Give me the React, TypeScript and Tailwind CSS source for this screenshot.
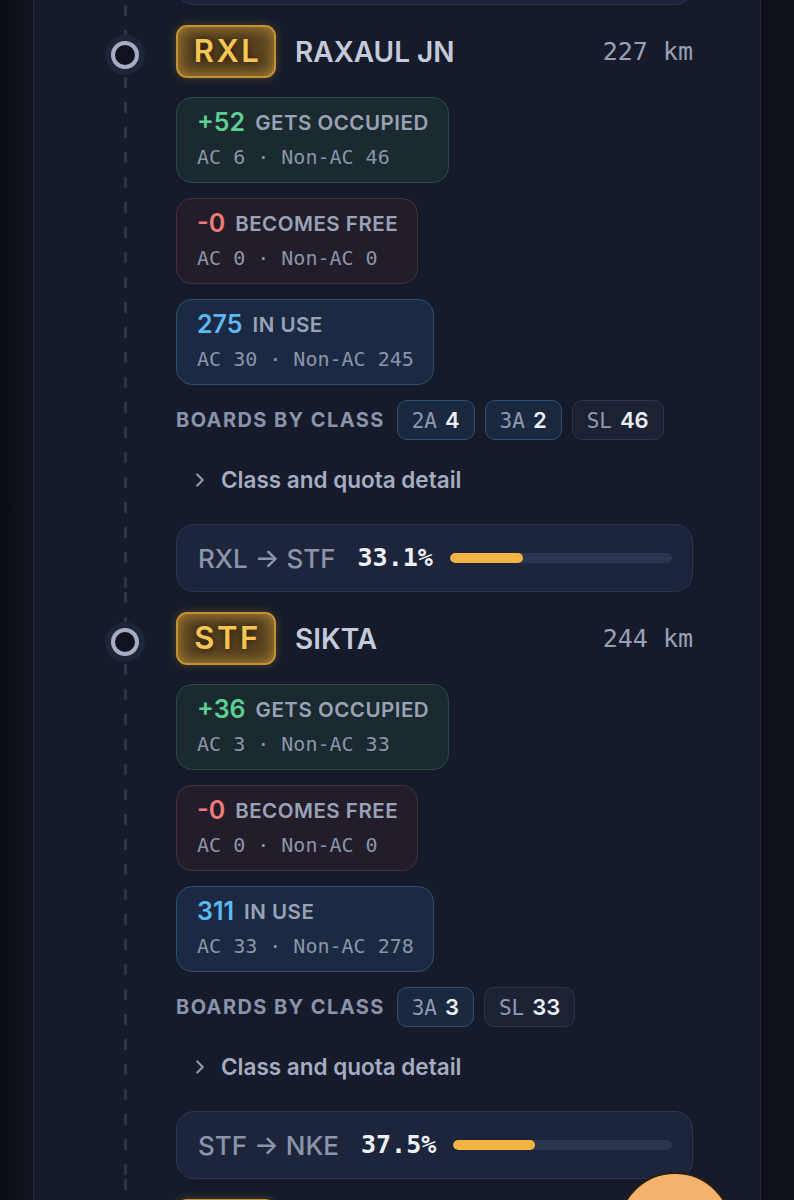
import { ChevronRight } from "lucide-react";

const SANS = "font-['Inter','Noto_Sans',sans-serif]";
const MONO = "font-['DejaVu_Sans_Mono','Liberation_Mono',monospace]";

const DASH =
  "w-[3px] [background-image:repeating-linear-gradient(to_bottom,#2c3447_0px,#2c3447_11px,transparent_11px,transparent_25px)]";

type Split = { n: number; ac: number; non: number };
type Board = { c: string; n: number; ac: boolean };
type Station = {
  code: string;
  name: string;
  km: number;
  occ: Split;
  free: Split;
  use: Split;
  boards: Board[];
  next: string;
  pct: number;
};

const stations: Station[] = [
  {
    code: "RXL",
    name: "RAXAUL JN",
    km: 227,
    occ: { n: 52, ac: 6, non: 46 },
    free: { n: 0, ac: 0, non: 0 },
    use: { n: 275, ac: 30, non: 245 },
    boards: [
      { c: "2A", n: 4, ac: true },
      { c: "3A", n: 2, ac: true },
      { c: "SL", n: 46, ac: false },
    ],
    next: "STF",
    pct: 33.1,
  },
  {
    code: "STF",
    name: "SIKTA",
    km: 244,
    occ: { n: 36, ac: 3, non: 33 },
    free: { n: 0, ac: 0, non: 0 },
    use: { n: 311, ac: 33, non: 278 },
    boards: [
      { c: "3A", n: 3, ac: true },
      { c: "SL", n: 33, ac: false },
    ],
    next: "NKE",
    pct: 37.5,
  },
  {
    code: "NKE",
    name: "NARKATIAGANJ",
    km: 262,
    occ: { n: 20, ac: 2, non: 18 },
    free: { n: 4, ac: 0, non: 4 },
    use: { n: 327, ac: 35, non: 292 },
    boards: [{ c: "SL", n: 18, ac: false }],
    next: "BTH",
    pct: 39.4,
  },
];

function ProgressCard({ from, to, pct }: { from: string; to: string; pct: number }) {
  return (
    <div className="h-[68px] rounded-[18px] border border-[#2b3650] bg-[#1c253b] pl-[21px] pr-[20px] flex items-center">
      <span className={`${SANS} text-[26px] font-medium text-[#8c94ab] whitespace-nowrap`}>
        {from} → {to}
      </span>
      <span className={`${MONO} ml-[22px] text-[25px] font-bold text-[#eef1f6]`}>
        {pct.toFixed(1)}%
      </span>
      <div className="ml-[17px] flex-1 h-[10px] rounded-full bg-[#2c3650] overflow-hidden">
        <div className="h-full rounded-full bg-[#f4b443]" style={{ width: `${pct}%` }} />
      </div>
    </div>
  );
}

function StatCard({
  value,
  label,
  split,
  tone,
}: {
  value: string;
  label: string;
  split: Split;
  tone: "green" | "red" | "blue";
}) {
  const box =
    tone === "green"
      ? "bg-[#1a2a2f] border-[#2b4a45]"
      : tone === "red"
      ? "bg-[#221d29] border-[#4a2f3b]"
      : "bg-[#1b2a42] border-[#2e4f6f]";
  const num =
    tone === "green" ? "text-[#5dcf94]" : tone === "red" ? "text-[#ef7b78]" : "text-[#5bb8f4]";
  return (
    <div className={`self-start rounded-[16px] border ${box} pl-[20px] pr-[19px] py-[10px]`}>
      <div className="h-[30px] flex items-center gap-[10px] whitespace-nowrap">
        <span className={`${SANS} text-[25px] font-semibold ${num}`}>{value}</span>
        <span className={`${SANS} text-[20.5px] font-semibold tracking-[0.025em] text-[#9aa2b7]`}>
          {label}
        </span>
      </div>
      <div className={`${MONO} mt-[4px] h-[30px] flex items-center text-[20px] text-[#8c94aa] whitespace-pre`}>
        AC {split.ac} · Non-AC {split.non}
      </div>
    </div>
  );
}

function TimelineNode() {
  return (
    <div className="w-[40px] flex flex-col items-center self-stretch">
      <div className={`${DASH} h-[30px]`} />
      <div className="w-[40px] h-[40px] rounded-full bg-[#1d2539] flex items-center justify-center">
        <div className="w-[28px] h-[28px] rounded-full border-4 border-[#a5acc4] bg-[#0f1320]" />
      </div>
      <div className={`${DASH} flex-1 mt-[2px]`} />
    </div>
  );
}

function StationBlock({ s }: { s: Station }) {
  return (
    <div className="flex">
      <TimelineNode />
      <div className="ml-[31px] flex-1 pt-[20px] flex flex-col">
        <div className="h-[53px] flex items-center">
          <div
            className={`${SANS} h-[53px] w-[100px] rounded-[11px] border-2 border-[#c4932f] bg-[#5a4421] shadow-[inset_0_0_14px_rgba(250,190,70,0.55),0_0_10px_rgba(245,180,60,0.25)] flex items-center justify-center text-[31px] font-semibold tracking-[0.08em] pl-[3px] text-[#f6c553] [text-shadow:0_0_8px_rgba(20,14,5,0.95)]`}
          >
            {s.code}
          </div>
          <span className={`${SANS} ml-[19px] text-[28px] font-semibold text-[#c5cadb]`}>{s.name}</span>
          <span className={`${MONO} ml-auto text-[25px] text-[#9aa0b4]`}>{s.km} km</span>
        </div>
        <div className="mt-[19px] flex flex-col gap-[15px]">
          <StatCard value={`+${s.occ.n}`} label="GETS OCCUPIED" split={s.occ} tone="green" />
          <StatCard value={`-${s.free.n}`} label="BECOMES FREE" split={s.free} tone="red" />
          <StatCard value={`${s.use.n}`} label="IN USE" split={s.use} tone="blue" />
        </div>
        <div className="mt-[15px] h-[40px] flex items-center">
          <span className={`${SANS} text-[20px] font-bold tracking-[0.07em] text-[#8a93aa] whitespace-nowrap`}>
            BOARDS BY CLASS
          </span>
          <div className="ml-[12px] flex gap-[10px]">
            {s.boards.map((b) => (
              <div
                key={b.c}
                className={`h-[40px] rounded-[10px] border px-[14px] flex items-center gap-[8px] ${
                  b.ac ? "border-[#2f5070] bg-[#1a2940]" : "border-[#2b3448] bg-[#1b2234]"
                }`}
              >
                <span className={`${MONO} text-[21px] leading-none pt-[2px] text-[#8f98b0]`}>{b.c}</span>
                <span className={`${SANS} text-[22px] leading-none font-semibold text-[#eceff5]`}>{b.n}</span>
              </div>
            ))}
          </div>
        </div>
        <div className="mt-[19px] h-[42px] pl-[13px] flex items-center">
          <ChevronRight className="w-[22px] h-[22px] text-[#8f97ad]" strokeWidth={2.4} />
          <span className={`${SANS} ml-[10px] text-[22.5px] font-semibold text-[#a6adc0]`}>
            Class and quota detail
          </span>
        </div>
        <div className="mt-[23px]">
          <ProgressCard from={s.code} to={s.next} pct={s.pct} />
        </div>
      </div>
    </div>
  );
}

export default function App() {
  return (
    <div className="w-[794px] h-[1200px] overflow-hidden flex bg-[#0c0f16]">
      <div className="w-[33px] bg-gradient-to-r from-[#0a0c12] to-[#11151e]" />
      <div className="w-[728px] h-full border-x border-[#222a3b] bg-[#151b2a] overflow-hidden pl-[71px] pr-[67px]">
        <div className="-mt-[63px]">
          <div className="flex">
            <div className="w-[40px] flex justify-center">
              <div className={`${DASH} h-[68px]`} />
            </div>
            <div className="ml-[31px] flex-1">
              <ProgressCard from="BGU" to="RXL" pct={30.6} />
            </div>
          </div>
          {stations.map((s) => (
            <StationBlock key={s.code} s={s} />
          ))}
        </div>
      </div>
      <div className="flex-1 bg-[#0d111a]" />
      <div className="fixed left-[617px] top-[1172px] w-[116px] h-[116px] rounded-full bg-[#f4b26c] border-2 border-[#2a1d12]" />
    </div>
  );
}
